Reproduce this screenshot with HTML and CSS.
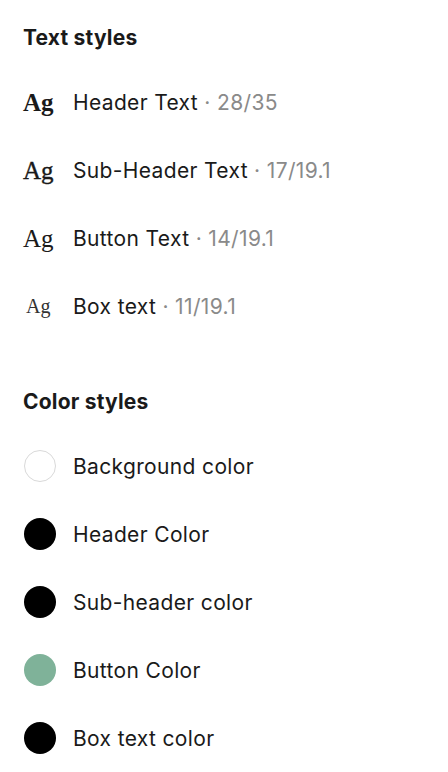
FILE: index.html
```html
<!DOCTYPE html>
<html>
<head>
<meta charset="utf-8">
<link rel="stylesheet" href="styles.css">
</head>
<body>
<section class="group">
  <h2 class="title">Text styles</h2>
  <div class="row"><span class="ag ag-1">Ag</span><span class="label">Header Text <span class="meta">· 28/35</span></span></div>
  <div class="row"><span class="ag ag-2">Ag</span><span class="label">Sub-Header Text <span class="meta">· 17/19.1</span></span></div>
  <div class="row"><span class="ag ag-3">Ag</span><span class="label">Button Text <span class="meta">· 14/19.1</span></span></div>
  <div class="row"><span class="ag ag-4">Ag</span><span class="label">Box text <span class="meta">· 11/19.1</span></span></div>
</section>
<section class="group group-colors">
  <h2 class="title">Color styles</h2>
  <div class="row"><span class="swatch swatch-white"></span><span class="label">Background color</span></div>
  <div class="row"><span class="swatch swatch-black"></span><span class="label">Header Color</span></div>
  <div class="row"><span class="swatch swatch-black"></span><span class="label">Sub-header color</span></div>
  <div class="row"><span class="swatch swatch-green"></span><span class="label">Button Color</span></div>
  <div class="row"><span class="swatch swatch-black"></span><span class="label">Box text color</span></div>
</section>
</body>
</html>
```
FILE: styles.css
```css
html, body {
  margin: 0;
  padding: 0;
  background: #ffffff;
}
body {
  font-family: Inter, "Noto Sans", sans-serif;
  color: #1a1a1a;
  padding: 24px 0 0 23px;
}
.group {
  display: flex;
  flex-direction: column;
}
.group-colors {
  margin-top: 48px;
}
.title {
  margin: 0 0 16px 0;
  font-size: 21px;
  line-height: 28px;
  font-weight: 700;
  letter-spacing: 0.2px;
  color: #1a1a1a;
}
.row {
  height: 68px;
  display: flex;
  align-items: center;
}
.ag {
  width: 50px;
  font-family: "Liberation Serif", serif;
  color: #1a1a1a;
  line-height: 1;
}
.ag-1 { font-size: 25px; font-weight: 700; }
.ag-2 { font-size: 25px; font-weight: 400; -webkit-text-stroke: 0.35px #1a1a1a; }
.ag-3 { font-size: 25px; font-weight: 400; }
.ag-4 { font-size: 20px; font-weight: 400; color: #333; padding-left: 3px; width: 47px; }
.label {
  font-size: 21px;
  line-height: 28px;
  letter-spacing: 0.35px;
  color: #1a1a1a;
  padding-top: 1px;
}
.meta {
  color: #8a8a8a;
}
.swatch {
  width: 32px;
  height: 32px;
  border-radius: 50%;
  margin-left: 1px;
  margin-right: 17px;
  box-sizing: border-box;
}
.swatch-white { border: 1px solid #d9d9d9; background: #fff; }
.swatch-black { background: #000; }
.swatch-green { background: #7fb299; }
```
